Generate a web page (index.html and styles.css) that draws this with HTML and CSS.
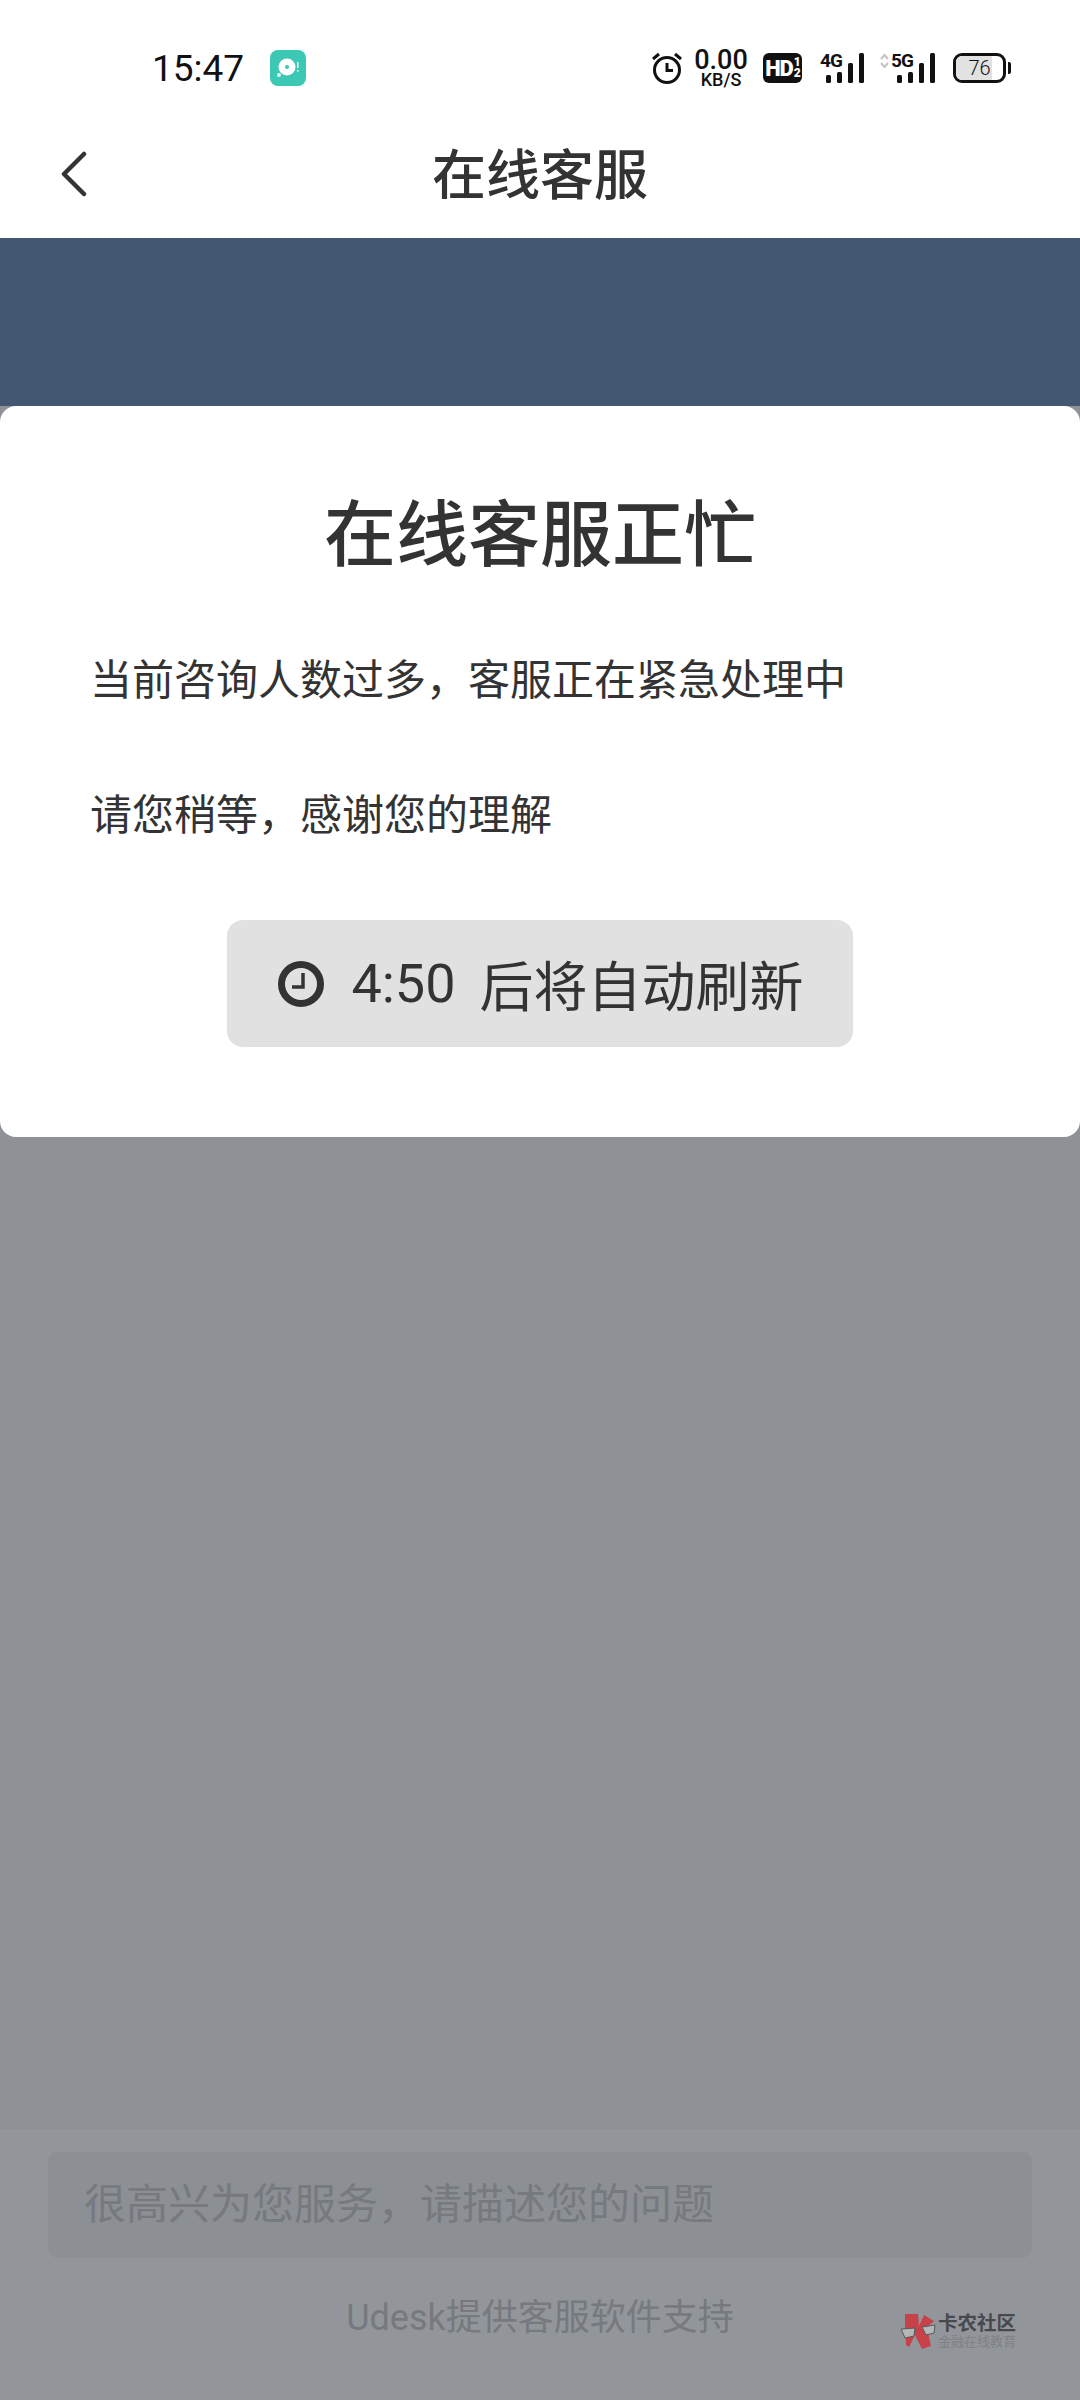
FILE: index.html
```html
<!DOCTYPE html>
<html lang="zh-CN">
  <head>
    <meta charset="UTF-8" />
    <meta name="viewport" content="width=device-width, initial-scale=1.0" />
    <link rel="stylesheet" href="styles.css">
  </head>

  <body>
    <div class="app">
      <!-- status bar -->
      <div class="status">
        <span class="time">15:47</span>
        <svg class="app-icon" width="36" height="36" viewBox="0 0 36 36">
          <rect width="36" height="36" rx="8" fill="#3cc8b4" />
          <circle cx="17" cy="17" r="8.5" fill="#fff" />
          <circle cx="17" cy="17" r="2" fill="#3cc8b4" />
          <circle cx="9" cy="25" r="2" fill="#dff6f2" />
          <rect x="27" y="12" width="1.6" height="6" fill="#dff6f2" />
          <rect x="27" y="20" width="1.6" height="1.6" fill="#dff6f2" />
        </svg>
        <div class="status-right">
          <svg class="alarm" width="32" height="34" viewBox="0 0 32 34" fill="none" stroke="#111">
            <circle cx="16" cy="19" r="12.5" stroke-width="3" />
            <path d="M16 12v7.5h6" stroke-width="3" />
            <path d="M2 8l6-5M30 8l-6-5" stroke-width="3" />
          </svg>
          <div class="speed">
            <span class="speed-num">0.00</span>
            <span class="speed-unit">KB/S</span>
          </div>
          <div class="hd">HD<span class="hd-frac"><i>1</i><i>2</i></span></div>
          <div class="signal">
            <span class="net">4G</span>
            <svg width="45" height="30" viewBox="0 0 45 30" fill="#111">
              <rect x="6" y="22" width="5" height="8" rx="1.5" />
              <rect x="17" y="19" width="5" height="11" rx="1.5" />
              <rect x="28" y="10" width="5" height="20" rx="1.5" />
              <rect x="39" y="0" width="5" height="30" rx="1.5" />
            </svg>
          </div>
          <div class="signal signal-5g">
            <svg class="updown" width="9" height="16" viewBox="0 0 9 16" fill="none" stroke="#c4c4c4" stroke-width="2">
              <path d="M1 6l3.5-4L8 6M1 10l3.5 4L8 10" />
            </svg>
            <span class="net">5G</span>
            <svg width="45" height="30" viewBox="0 0 45 30" fill="#111">
              <rect x="7" y="22" width="5" height="8" rx="1.5" />
              <rect x="18" y="19" width="5" height="11" rx="1.5" />
              <rect x="29" y="10" width="5" height="20" rx="1.5" />
              <rect x="40" y="0" width="5" height="30" rx="1.5" />
            </svg>
          </div>
          <div class="battery">
            <div class="battery-body"><span class="battery-fill"></span><span class="battery-num">76</span></div>
            <span class="battery-tip"></span>
          </div>
        </div>
      </div>

      <!-- title bar -->
      <div class="nav">
        <svg class="back" width="30" height="46" viewBox="0 0 30 46" fill="none" stroke="#333" stroke-width="4.5" stroke-linecap="round" stroke-linejoin="round">
          <path d="M24 3L4 23l20 20" />
        </svg>
        <h1 class="nav-title">在线客服</h1>
      </div>

      <div class="band"></div>

      <div class="main">
        <div class="card">
          <h2 class="card-title">在线客服正忙</h2>
          <p class="card-line">当前咨询人数过多，客服正在紧急处理中</p>
          <p class="card-line">请您稍等，感谢您的理解</p>
          <div class="refresh">
            <svg width="46" height="46" viewBox="0 0 46 46" fill="none" stroke="#333">
              <circle cx="23" cy="23" r="19.5" stroke-width="7" />
              <path d="M25 12v14H14" stroke-width="3.5" />
            </svg>
            <span class="refresh-time">4:50</span>
            <span>后将自动刷新</span>
          </div>
        </div>

        <div class="spacer"></div>

        <div class="bottom">
          <div class="input">很高兴为您服务，请描述您的问题</div>
          <div class="support">Udesk提供客服软件支持</div>
          <div class="logo">
            <svg width="36" height="36" viewBox="0 0 36 36">
              <path d="M5 1h13l1 12 5-11 10 6-7 6 4 19-9 3-7-14-6 12-3-2-1-18z" fill="#c8424a" />
              <path d="M1 16l14-1-1 8-9 2zM22 14l13-2-1 8-8 2z" fill="#b4b6b8" stroke="#55585c" stroke-width="1" />
            </svg>
            <div class="logo-text">
              <span class="logo-name">卡农社区</span>
              <span class="logo-sub">金融在线教育</span>
            </div>
          </div>
        </div>
      </div>
    </div>
  </body>
</html>
```

FILE: styles.css
```css
* {
  box-sizing: border-box;
}
body {
  margin: 0;
  font-family: Roboto, "Noto Sans CJK SC", sans-serif;
  color: #333;
}
.app {
  width: 1080px;
  height: 2400px;
  display: flex;
  flex-direction: column;
  background-color: #fff;
}

.status {
  height: 112px;
  flex-shrink: 0;
  display: flex;
  align-items: center;
  padding: 24px 69px 0 152px;
}
.time {
  font-size: 37px;
  color: #111;
}
.app-icon {
  margin-left: 26px;
}
.status-right {
  margin-left: auto;
  display: flex;
  align-items: center;
  color: #111;
}
.speed {
  display: flex;
  flex-direction: column;
  align-items: center;
  margin-left: 11px;
  width: 54px;
}
.speed-num {
  font-size: 27px;
  font-weight: 500;
  line-height: 23px;
}
.speed-unit {
  font-size: 18px;
  font-weight: 500;
  line-height: 16px;
}
.hd {
  margin-left: 15px;
  width: 39px;
  height: 30px;
  background-color: #111;
  border-radius: 6px;
  color: #fff;
  font-size: 22px;
  font-weight: 900;
  display: flex;
  align-items: center;
  justify-content: center;
  letter-spacing: -1px;
}
.hd-frac {
  display: flex;
  flex-direction: column;
  margin-left: 1px;
}
.hd-frac i {
  font-style: normal;
  font-size: 12px;
  line-height: 11px;
}
.signal {
  position: relative;
  width: 45px;
  height: 30px;
  margin-left: 18px;
}
.signal svg {
  display: block;
}
.net {
  position: absolute;
  left: 0;
  top: 0;
  font-size: 19px;
  font-weight: 700;
  line-height: 15px;
  letter-spacing: -1px;
}
.signal-5g {
  margin-left: 25px;
}
.signal-5g .net {
  left: 1px;
}
.signal-5g .updown {
  position: absolute;
  left: -10px;
  top: 0;
}
.battery {
  display: flex;
  align-items: center;
  margin-left: 18px;
}
.battery-body {
  position: relative;
  width: 53px;
  height: 30px;
  border: 3px solid #111;
  border-radius: 9px;
  overflow: hidden;
  display: flex;
  align-items: center;
  justify-content: center;
}
.battery-fill {
  position: absolute;
  left: 0;
  top: 0;
  bottom: 0;
  width: 76%;
  background-color: #e2e2e2;
}
.battery-num {
  position: relative;
  font-size: 20px;
  font-weight: 300;
}
.battery-tip {
  width: 3px;
  height: 12px;
  margin-left: 2px;
  background-color: #111;
  border-radius: 0 2px 2px 0;
}

.nav {
  height: 126px;
  flex-shrink: 0;
  position: relative;
  display: flex;
  align-items: center;
  justify-content: center;
  padding-bottom: 7px;
}
.back {
  position: absolute;
  left: 60px;
  top: 39px;
}
.nav-title {
  margin: 0;
  font-size: 54px;
  font-weight: 500;
  color: #333;
}

.band {
  height: 168px;
  flex-shrink: 0;
  background-color: #435672;
}

.main {
  flex: 1;
  display: flex;
  flex-direction: column;
  background-color: #8e9195;
}
.card {
  height: 731px;
  flex-shrink: 0;
  background-color: #fff;
  border-radius: 16px;
  padding: 83px 90px 0;
  display: flex;
  flex-direction: column;
}
.card-title {
  margin: 0 0 70px;
  font-size: 72px;
  font-weight: 500;
  line-height: 94px;
  text-align: center;
  color: #333;
}
.card-line {
  margin: 0 0 79px;
  font-size: 42px;
  line-height: 56px;
  color: #333;
}
.refresh {
  align-self: center;
  width: 626px;
  height: 127px;
  margin-top: -3px;
  padding-left: 2px;
  background-color: #e1e1e1;
  border-radius: 16px;
  display: flex;
  align-items: center;
  justify-content: center;
  font-size: 54px;
}
.refresh-time {
  margin: 0 24px 0 27px;
}

.spacer {
  flex: 1;
}
.bottom {
  height: 271px;
  flex-shrink: 0;
  position: relative;
  background-color: #92959a;
  padding: 23px 48px 0;
}
.input {
  height: 106px;
  background-color: #8c8f94;
  border-radius: 10px;
  padding: 0 0 9px 36px;
  display: flex;
  align-items: center;
  font-size: 42px;
  color: #76797e;
}
.support {
  margin-top: 33px;
  text-align: center;
  font-size: 36px;
  line-height: 54px;
  color: #76797e;
}
.logo {
  position: absolute;
  left: 900px;
  top: 184px;
  display: flex;
  align-items: center;
  gap: 2px;
}
.logo-text {
  display: flex;
  flex-direction: column;
}
.logo-name {
  font-size: 19.5px;
  font-weight: 700;
  line-height: 21px;
  color: #47494d;
}
.logo-sub {
  font-size: 13px;
  line-height: 15px;
  color: #7e8185;
}
```
